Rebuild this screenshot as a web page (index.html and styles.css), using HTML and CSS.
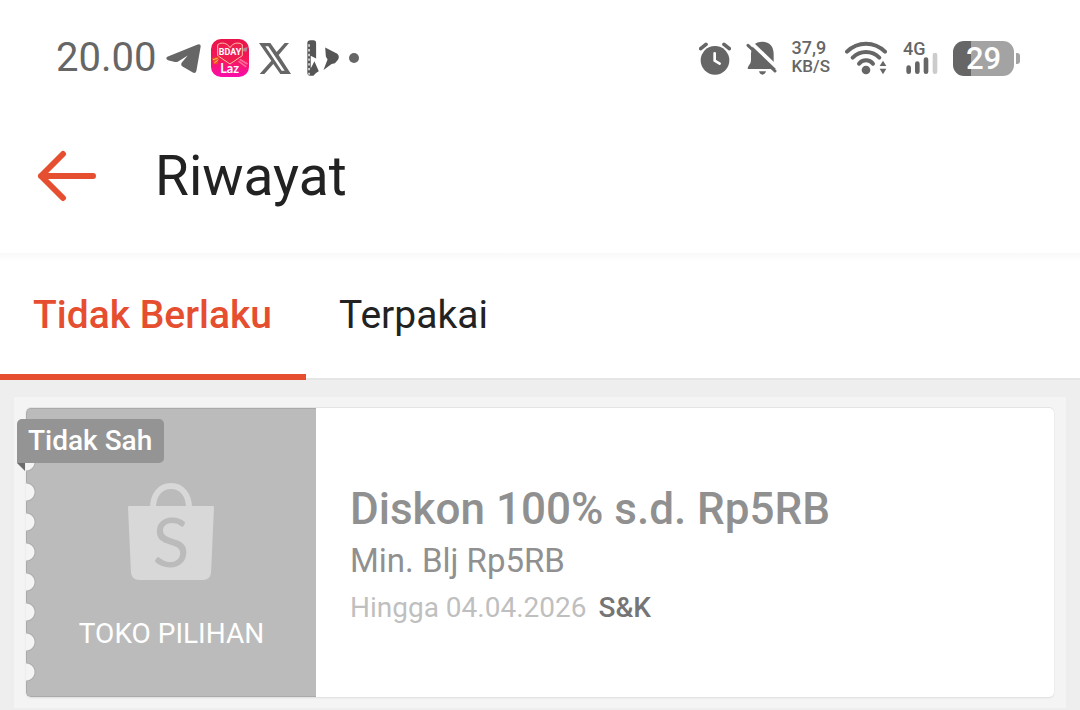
FILE: index.html
```html
<!DOCTYPE html>
<html lang="id">
<head>
    <meta charset="UTF-8">
    <meta name="viewport" content="width=device-width, initial-scale=1.0">
    <title>Riwayat</title>
    <link rel="stylesheet" href="styles.css">
</head>
<body>
    <div class="statusbar">
        <div class="status-left">
            <span class="clock">20.00</span>
            <svg width="35" height="31" viewBox="378 54 106 92" fill="#666">
                <path d="M382 95L472 58Q484 54 483 64L470 138Q467 148 458 142L428 124Q421 119 426 112L444 91L416 108Q410 112 402 110L384 105Q375 100 382 95Z"/>
            </svg>
            <svg width="38" height="38" viewBox="0 0 114 114">
                <defs>
                    <linearGradient id="laz" x1="0" y1="0" x2="0" y2="1">
                        <stop offset="0" stop-color="#e8144a"/>
                        <stop offset="0.55" stop-color="#f5195a"/>
                        <stop offset="1" stop-color="#fb0cae"/>
                    </linearGradient>
                </defs>
                <rect width="114" height="114" rx="30" fill="url(#laz)"/>
                <path d="M57 26C49 12 32 8 20 17V50L57 75L94 50V17C82 8 65 12 57 26Z" fill="#ee1c50" stroke="#ffc3a0" stroke-width="3"/>
                <path d="M3 58L24 52L20 76L8 74Z" fill="#e8501e"/>
                <path d="M6 62L20 58M10 72L22 62" stroke="#ffc06a" stroke-width="3"/>
                <path d="M84 68L104 82M88 62L108 74" stroke="#ff6a9c" stroke-width="5" stroke-linecap="round"/>
                <path d="M97 28L110 24L106 38L96 36Z" fill="#b0899b"/>
                <text x="57" y="49" class="laz-top">BDAY</text>
                <text x="56" y="101" class="laz-name">Laz</text>
            </svg>
            <svg width="32" height="31" viewBox="0 0 96 93" fill="#666">
                <path fill-rule="evenodd" d="M0 0H34L53 27L77 0H90L59 36L96 93H64L43 63L16 93H2L37 53ZM19 10L68 83H77L28 10Z"/>
            </svg>
            <svg class="player" width="32" height="36" viewBox="803 43 95 107" fill="#555">
                <path d="M804 52Q804 44 813 44H822Q830 44 830 52V98L814 90V128L825 106L838 136Q826 142 822 149H812Q804 149 804 140Z"/>
                <path d="M857 65L893 84Q901 92 895 102L886 112L876 114L852 132L864 101L859 92Z"/>
                <path d="M809 56V146" stroke="#fff" stroke-width="4" stroke-dasharray="7 7"/>
            </svg>
            <svg class="dot" width="10" height="10" viewBox="0 0 10 10" fill="#666">
                <circle cx="5" cy="5" r="5"/>
            </svg>
        </div>
        <div class="status-right">
            <svg width="32" height="33" viewBox="42 50 96 99">
                <circle cx="90" cy="105" r="43" fill="#666"/>
                <path d="M47 70L63 57M133 70L117 57" stroke="#666" stroke-width="11" stroke-linecap="round"/>
                <path d="M89 84V106L104 115" fill="none" stroke="#fff" stroke-width="8" stroke-linecap="round" stroke-linejoin="round"/>
            </svg>
            <svg width="31" height="34" viewBox="181 49 93 102" fill="#666">
                <path d="M186 132Q186 127 190 122Q196 116 196 106V88Q197 51 230 51Q264 52 264 90V112L274 133H190Q187 134 186 132Z"/>
                <path d="M192 50L280 134" stroke="#fff" stroke-width="11"/>
                <path d="M187 62L268 139" stroke="#666" stroke-width="9" stroke-linecap="round"/>
                <path d="M220 140H241Q238 150 230 150Q223 150 220 140Z"/>
            </svg>
            <div class="speed"><span>37,9</span><span>KB/S</span></div>
            <svg width="42" height="35" viewBox="477 45 126 105">
                <g fill="none" stroke="#666" stroke-width="12" stroke-linecap="round">
                    <path d="M483 77Q507 53 540 53Q573 53 597 77"/>
                    <path d="M500 95Q517 78 540 78Q563 78 580 95"/>
                    <path d="M519 113Q527 103 540 103Q553 103 561 113"/>
                </g>
                <circle cx="540" cy="132" r="13" fill="#666"/>
                <path d="M591 104L601 120H581ZM591 145L601 128H581Z" fill="#666"/>
            </svg>
            <svg width="36" height="38" viewBox="650 40 108 114">
                <text x="653" y="88" class="network">4G</text>
                <g stroke="#666" stroke-width="14" stroke-linecap="round">
                    <path d="M670 126V138M696 114V138M722 102V138"/>
                    <path d="M749 88V138" stroke="#ccc"/>
                </g>
            </svg>
            <div class="battery"><span>29</span></div>
        </div>
    </div>

    <header class="header">
        <button type="button" class="back" aria-label="Kembali">
            <svg width="60" height="52" viewBox="0 0 60 52" fill="none" stroke="#e64e30" stroke-width="6" stroke-linecap="round" stroke-linejoin="round">
                <path d="M27 4L5 26L27 48M5 26H57"/>
            </svg>
        </button>
        <h1>Riwayat</h1>
    </header>

    <nav class="tabs">
        <button type="button" class="tab active">Tidak Berlaku</button>
        <button type="button" class="tab">Terpakai</button>
    </nav>

    <main>
        <div class="voucher-wrap">
            <article class="voucher">
                <div class="voucher-shop">
                    <svg width="88" height="98" viewBox="0 0 88 98">
                        <path d="M25 25C25 12 32 3 43 3S61 12 61 25" fill="none" stroke="#d8d8d8" stroke-width="6"/>
                        <path d="M1 23H85Q86 23 86 24L83 90Q82 97 75 97H11Q4 97 3 90L0 24Q0 23 1 23Z" fill="#d8d8d8"/>
                        <text x="43" y="84" class="bag-letter">S</text>
                    </svg>
                    <span class="shop-name">TOKO PILIHAN</span>
                </div>
                <span class="ribbon">Tidak Sah</span>
                <div class="voucher-info">
                    <h2>Diskon 100% s.d. Rp5RB</h2>
                    <p class="minimum">Min. Blj Rp5RB</p>
                    <p class="expiry">Hingga 04.04.2026 <a href="#">S&amp;K</a></p>
                </div>
            </article>
        </div>
    </main>
</body>
</html>
```

FILE: styles.css
```css
body {
    font-family: Roboto, "Liberation Sans", sans-serif;
    background-color: #eee;
    color: #222;
    margin: 0;
}

h1, h2, p {
    margin: 0;
    font-weight: 400;
}

button {
    padding: 0;
    border: none;
    background: none;
    color: inherit;
    font-family: inherit;
    cursor: pointer;
}

svg {
    display: block;
    flex: none;
}

/* status bar */
.statusbar {
    display: flex;
    justify-content: space-between;
    align-items: center;
    height: 84px;
    padding: 16px 60px 0 56px;
    background-color: #fff;
    color: #666;
}

.status-left {
    display: flex;
    align-items: center;
    gap: 10px;
}

.clock {
    font-size: 40px;
    line-height: 48px;
}

.player {
    margin-left: 6px;
}

.laz-top {
    font-size: 27px;
    font-weight: 700;
    fill: #fff;
    text-anchor: middle;
}

.laz-name {
    font-family: Lato, sans-serif;
    font-size: 38px;
    font-weight: 700;
    fill: #fff;
    text-anchor: middle;
}

.status-right {
    display: flex;
    align-items: center;
    gap: 15px;
}

.speed {
    display: flex;
    flex-direction: column;
    font-size: 17px;
    font-weight: 500;
    line-height: 18px;
    padding-bottom: 2px;
}

.speed span:first-child {
    font-size: 18px;
}

.network {
    font-size: 54px;
    font-weight: 500;
    fill: #666;
}

.battery {
    position: relative;
    width: 61px;
    margin-right: 6px;
    border-radius: 11px;
    background: linear-gradient(to right, #666 29%, #a3a3a3 29%);
    color: #fff;
    font-size: 31px;
    font-weight: 500;
    line-height: 35px;
    text-align: center;
}

.battery::after {
    content: "";
    position: absolute;
    top: 12px;
    right: -6px;
    width: 4px;
    height: 11px;
    border-radius: 0 3px 3px 0;
    background-color: #a3a3a3;
}

/* header */
.header {
    display: flex;
    align-items: center;
    gap: 59px;
    padding: 40px 36px 41px;
    background-color: #fff;
}

.header h1 {
    font-size: 55px;
    line-height: 72px;
}

/* tabs */
.tabs {
    display: flex;
    background: linear-gradient(#f9f9f9, #fff 8px);
    border-bottom: 2px solid #e5e5e5;
}

.tab {
    padding: 36px 34px 33px 33px;
    margin-bottom: -2px;
    border-bottom: 6px solid transparent;
    font-size: 39px;
    line-height: 52px;
}

.tab.active {
    border-color: #e64e30;
    color: #e64e30;
    font-weight: 500;
}

/* voucher */
main {
    padding: 17px 14px 2px;
}

.voucher-wrap {
    padding: 11px 12px;
    background-color: #f4f4f4;
}

.voucher {
    position: relative;
    display: flex;
    border-radius: 5px;
    background-color: #fff;
    box-shadow: 0 1px 2px #ddd, 0 -1px 0 #e4e4e4;
}

.voucher-shop {
    display: flex;
    flex-direction: column;
    align-items: center;
    gap: 36px;
    box-sizing: border-box;
    width: 290px;
    padding: 74px 0 45px;
    border: 1px solid #aaa;
    border-right: none;
    border-radius: 5px 0 0 5px;
    background-color: #bbb;
}

/* torn edge */
.voucher-shop::before {
    content: "";
    position: absolute;
    top: 39px;
    left: 0;
    width: 11px;
    height: 240px;
    background: radial-gradient(circle at 0 50%, #f4f4f4 8px, #aaa 9px, #bbb 10px, transparent 10px) 0 0 / 11px 30px;
}

.shop-name {
    color: #fff;
    font-size: 28px;
    line-height: 34px;
}

.bag-letter {
    font-family: Lato, sans-serif;
    font-size: 68px;
    fill: #bbb;
    text-anchor: middle;
}

.ribbon {
    position: absolute;
    top: 11px;
    left: -9px;
    padding: 0 12px 0 11px;
    border-radius: 5px 5px 5px 0;
    background-color: #949494;
    color: #fff;
    font-size: 28px;
    font-weight: 500;
    line-height: 44px;
}

.ribbon::after {
    content: "";
    position: absolute;
    top: 100%;
    left: 0;
    border-top: 8px solid #6b6b6b;
    border-left: 8px solid transparent;
}

.voucher-info {
    flex: 1;
    display: flex;
    flex-direction: column;
    justify-content: center;
    padding: 6px 34px 0;
    color: #909090;
}

.voucher-info h2 {
    font-size: 44px;
    font-weight: 500;
    line-height: 56px;
}

.minimum {
    font-size: 33px;
    line-height: 48px;
}

.expiry {
    color: #bfbfbf;
    font-size: 28px;
    line-height: 46px;
}

.expiry a {
    margin-left: 5px;
    color: #757575;
    font-weight: 500;
    text-decoration: none;
}
```
